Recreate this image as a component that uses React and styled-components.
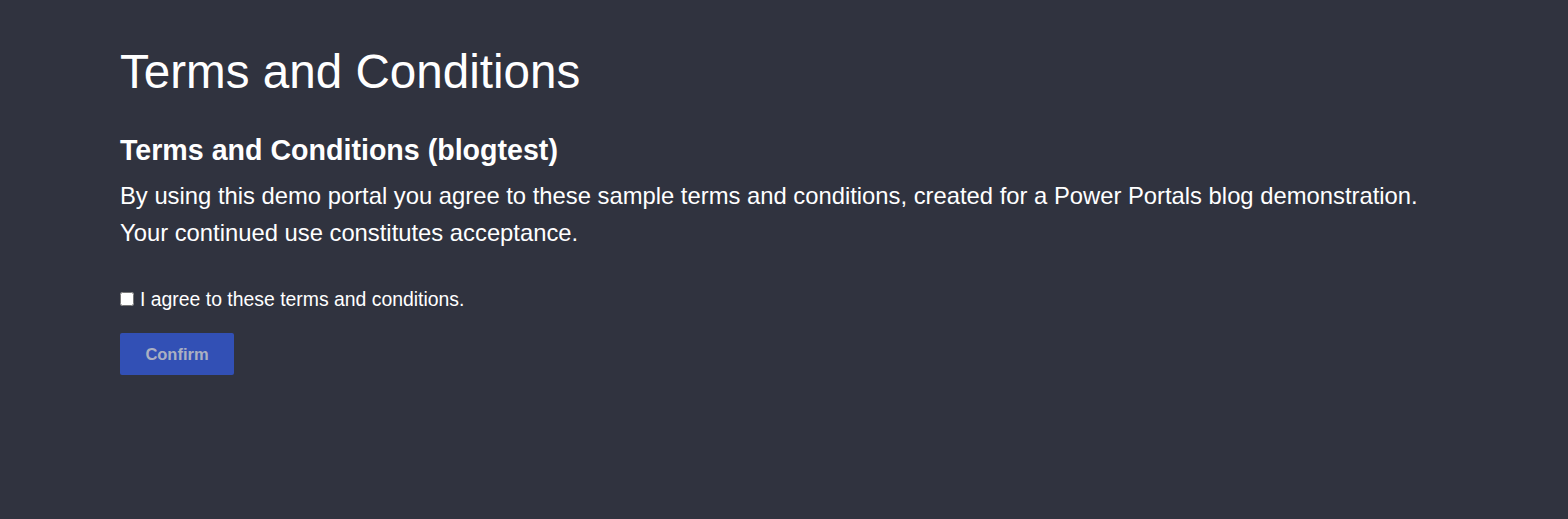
import styled, { createGlobalStyle } from "styled-components";

const GlobalStyle = createGlobalStyle`
  html, body {
    margin: 0;
    padding: 0;
    background: #30333f;
  }
  body {
    font-family: "Liberation Sans", Arial, sans-serif;
    color: #ffffff;
  }
`;

const Page = styled.main`
  min-height: 519px;
  background: #30333f;
  padding: 40px 120px 0;
  box-sizing: border-box;
`;

const Title = styled.h1`
  margin: 0;
  font-size: 47.6px;
  font-weight: 400;
  line-height: 64px;
`;

const Subtitle = styled.h2`
  margin: 28px 0 0;
  font-size: 28.6px;
  font-weight: 700;
  line-height: 36px;
`;

const Body = styled.p`
  margin: 9px 0 0;
  font-size: 23.8px;
  line-height: 37px;
`;

const AgreeRow = styled.label`
  display: flex;
  align-items: center;
  gap: 6px;
  margin-top: 36px;
  font-size: 19.4px;
  line-height: 24px;
`;

const Checkbox = styled.input`
  margin: 0;
  width: 14px;
  height: 14px;
`;

const ConfirmButton = styled.button`
  margin-top: 22px;
  width: 114px;
  height: 42px;
  border: none;
  border-radius: 2px;
  background: #3250b5;
  color: #abb0c2;
  font-family: "Liberation Sans", Arial, sans-serif;
  font-size: 16.5px;
  font-weight: 700;
  cursor: not-allowed;
`;

export default function App() {
  return (
    <>
      <GlobalStyle />
      <Page>
        <Title>Terms and Conditions</Title>
        <Subtitle>Terms and Conditions (blogtest)</Subtitle>
        <Body>
          By using this demo portal you agree to these sample terms and conditions, created for a Power Portals blog demonstration.
          <br />
          Your continued use constitutes acceptance.
        </Body>
        <AgreeRow>
          <Checkbox type="checkbox" />
          I agree to these terms and conditions.
        </AgreeRow>
        <ConfirmButton disabled>Confirm</ConfirmButton>
      </Page>
    </>
  );
}
